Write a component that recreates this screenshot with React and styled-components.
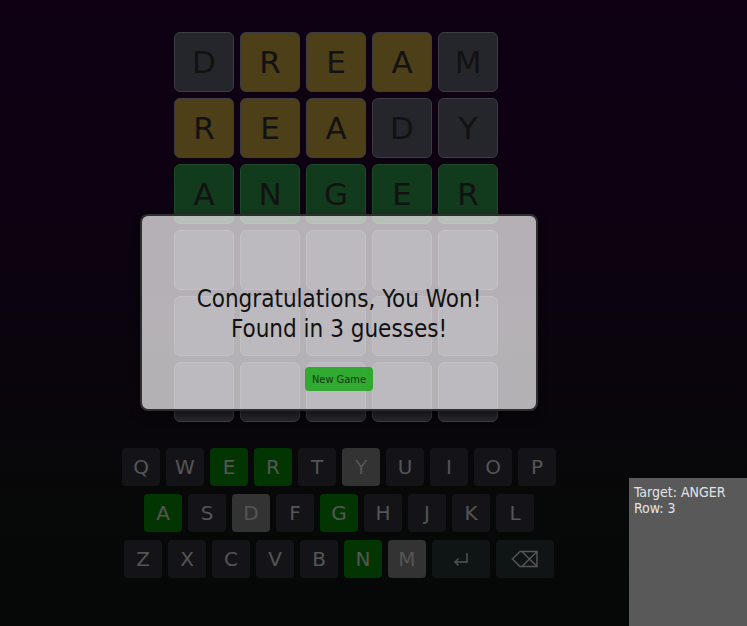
import React from "react";
import styled, { createGlobalStyle } from "styled-components";

const GlobalStyle = createGlobalStyle`
  html, body {
    margin: 0;
    padding: 0;
    height: 100%;
  }
  body {
    font-family: "DejaVu Sans", Verdana, sans-serif;
    background: #08070a;
  }
`;

const Page = styled.div`
  min-height: 626px;
  background: linear-gradient(180deg, #0f0014 0%, #0c0310 45%, #070808 80%, #060807 100%);
  display: flex;
  justify-content: center;
  padding-right: 75px;
  box-sizing: border-box;
`;

const Column = styled.div`
  display: flex;
  flex-direction: column;
  align-items: center;
  padding-top: 32px;
`;

const BoardWrap = styled.div`
  position: relative;
`;

const Board = styled.div`
  display: grid;
  grid-template-columns: repeat(5, 60px);
  grid-auto-rows: 60px;
  gap: 6px;
`;

const tileColors = {
  absent: "#25262b",
  present: "#4d3f17",
  correct: "#123a1c",
  empty: "#26272b",
};

const Tile = styled.div`
  box-sizing: border-box;
  border-radius: 6px;
  border: 1px solid ${(p) => (p.$state === "correct" ? "#1d4a28" : "#3d3c42")};
  background: ${(p) => tileColors[p.$state]};
  color: #121212;
  font-size: 31px;
  display: flex;
  align-items: center;
  justify-content: center;
`;

const Modal = styled.div`
  position: absolute;
  left: -34px;
  top: 182px;
  width: 398px;
  height: 197px;
  box-sizing: border-box;
  border: 2px solid #2e2d30;
  border-radius: 8px;
  background: rgba(246, 244, 246, 0.72);
  box-shadow: 0 4px 10px rgba(0, 0, 0, 0.55);
  display: flex;
  flex-direction: column;
  align-items: center;
  padding-top: 68px;
`;

const Message = styled.div`
  color: #111;
  font-family: "DejaVu Sans Condensed", "DejaVu Sans", sans-serif;
  font-size: 24px;
  line-height: 30px;
  text-align: center;
`;

const NewGame = styled.button`
  margin-top: 23px;
  width: 68px;
  height: 24px;
  border: none;
  border-radius: 4px;
  background: rgba(36, 168, 36, 0.92);
  color: #173417;
  font-family: "DejaVu Sans Condensed", "DejaVu Sans", sans-serif;
  font-size: 11px;
  padding: 0;
`;

const Keyboard = styled.div`
  margin-top: 26px;
  display: flex;
  flex-direction: column;
  align-items: center;
  gap: 8px;
  margin-left: 6px;
`;

const KeyRow = styled.div`
  display: flex;
  gap: 6px;
`;

const keyColors = {
  unused: "#141418",
  correct: "#023502",
  absent: "#333333",
  action: "#0f1514",
};

const Key = styled.div`
  width: ${(p) => (p.$wide ? "58px" : "38px")};
  height: 38px;
  border-radius: 4px;
  background: ${(p) => keyColors[p.$state]};
  color: #555;
  font-size: 20px;
  display: flex;
  align-items: center;
  justify-content: center;
`;

const InfoPanel = styled.div`
  position: fixed;
  right: 0;
  bottom: 0;
  width: 118px;
  height: 148px;
  box-sizing: border-box;
  padding: 6px 5px;
  background: #595959;
  color: #e4e4e4;
  font-family: "DejaVu Sans Condensed", "DejaVu Sans", sans-serif;
  font-size: 14px;
  line-height: 16px;
`;

const guesses = [
  [["D", "absent"], ["R", "present"], ["E", "present"], ["A", "present"], ["M", "absent"]],
  [["R", "present"], ["E", "present"], ["A", "present"], ["D", "absent"], ["Y", "absent"]],
  [["A", "correct"], ["N", "correct"], ["G", "correct"], ["E", "correct"], ["R", "correct"]],
];

const keyState = {
  E: "correct", R: "correct", A: "correct", G: "correct", N: "correct",
  Y: "absent", D: "absent", M: "absent",
};

const EnterIcon = () => (
  <svg width="18" height="14" viewBox="0 0 18 14" fill="none" stroke="#555" strokeWidth="1.4">
    <path d="M15 1 V10 H3" />
    <path d="M6.5 6.5 L3 10 L6.5 13.5" />
  </svg>
);

const BackIcon = () => (
  <svg width="28" height="18" viewBox="0 0 28 18" fill="none" stroke="#555" strokeWidth="1.5">
    <path d="M9 1.5 H26 V16.5 H9 L1.5 9 Z" />
    <path d="M11 1.5 L26 16.5 M11 16.5 L26 1.5" />
  </svg>
);

const rows = ["QWERTYUIOP", "ASDFGHJKL", "ZXCVBNM"];

const App = () => {
  const cells = [];
  for (let r = 0; r < 6; r++) {
    for (let c = 0; c < 5; c++) {
      const g = guesses[r];
      cells.push(g ? g[c] : ["", "empty"]);
    }
  }

  return (
    <>
      <GlobalStyle />
      <Page>
        <Column>
          <BoardWrap>
            <Board>
              {cells.map(([letter, state], i) => (
                <Tile key={i} $state={state}>{letter}</Tile>
              ))}
            </Board>
            <Modal>
              <Message>
                Congratulations, You Won!
                <br />
                Found in 3 guesses!
              </Message>
              <NewGame>New Game</NewGame>
            </Modal>
          </BoardWrap>
          <Keyboard>
            {rows.map((row, ri) => (
              <KeyRow key={row}>
                {row.split("").map((k) => (
                  <Key key={k} $state={keyState[k] || "unused"}>{k}</Key>
                ))}
                {ri === 2 && (
                  <>
                    <Key $wide $state="action"><EnterIcon /></Key>
                    <Key $wide $state="action"><BackIcon /></Key>
                  </>
                )}
              </KeyRow>
            ))}
          </Keyboard>
        </Column>
      </Page>
      <InfoPanel>
        Target: ANGER
        <br />
        Row: 3
      </InfoPanel>
    </>
  );
};

export default App;
